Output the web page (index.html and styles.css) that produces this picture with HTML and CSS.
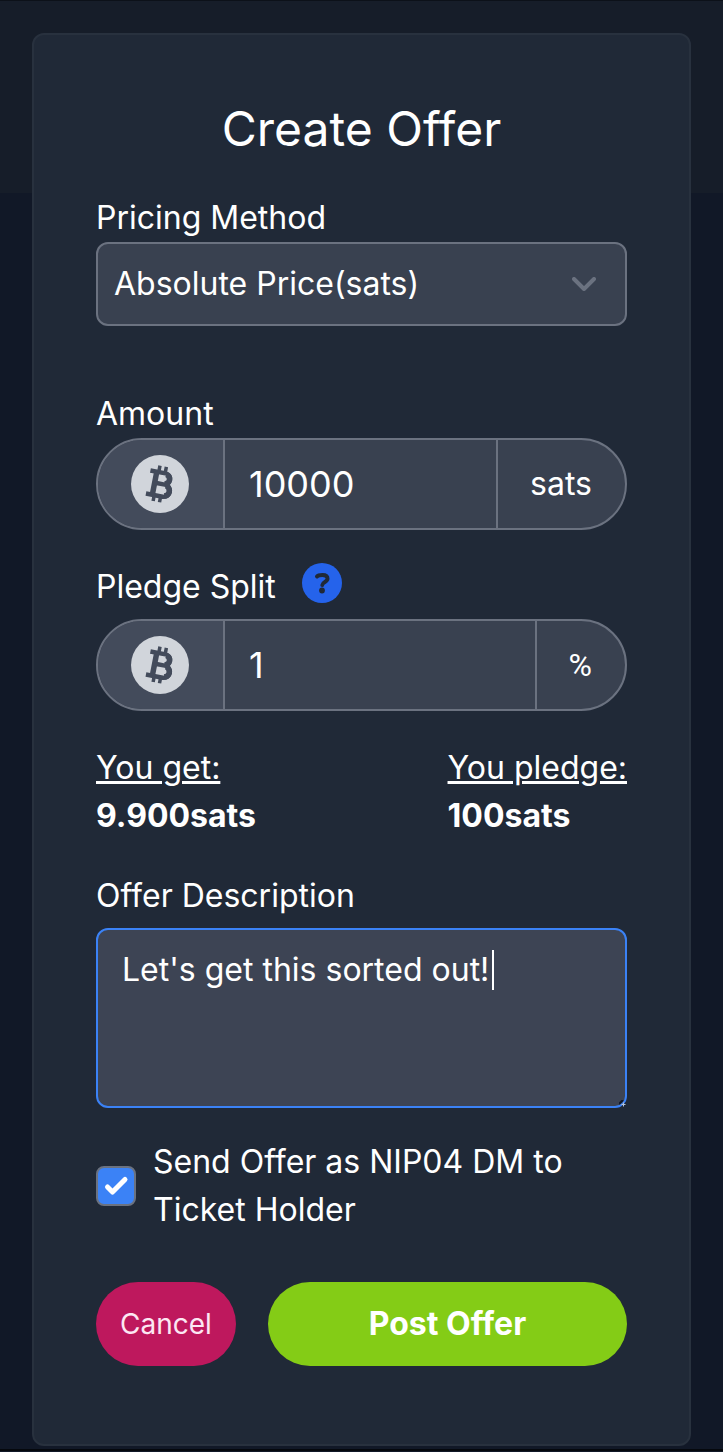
FILE: index.html
```html
<!DOCTYPE html>
<html lang="en">
<head>
<meta charset="utf-8">
<meta name="viewport" content="width=device-width, initial-scale=1">
<title>Create Offer</title>
<link rel="stylesheet" href="styles.css">
</head>
<body>
<svg class="sprite" aria-hidden="true">
  <symbol id="bitcoin" viewBox="0 0 58 58">
    <circle cx="29" cy="29" r="29" fill="#d1d5db"/>
    <g transform="rotate(11 29 29)" fill="none" stroke="#434b5b">
      <path stroke-width="4.500" d="M17 17.500H32.500a5.500 5.500 0 0 1 0 11.200H24M32.500 28.700H34a6 6 0 0 1 0 12.300H17"/>
      <path stroke-width="5.500" d="M23.500 17.500V41M33.500 18.500q4 1 4 4.700t-4 4.700M35.500 29.500q4 1.500 4 5.300t-4 5.200"/>
      <path stroke-width="3.500" d="M25.500 11V17M32 11V17M25.500 41V47M32 41V47"/>
    </g>
  </symbol>
</svg>
<main class="page">
  <form class="card">
    <h1 class="title">Create Offer</h1>

    <label class="label" for="method">Pricing Method</label>
    <div class="select-wrap">
      <select class="select" id="method"><option>Absolute Price(sats)</option></select>
      <svg class="chevron" viewBox="0 0 24 14" aria-hidden="true"><path d="M2 2l10 10L22 2"/></svg>
    </div>

    <label class="label label-amount" for="amount">Amount</label>
    <div class="group">
      <span class="addon addon-icon"><svg class="coin" aria-hidden="true"><use href="#bitcoin"/></svg></span>
      <input class="field" id="amount" type="text" inputmode="numeric" value="10000">
      <span class="addon">sats</span>
    </div>

    <div class="label-row">
      <label class="label" for="split">Pledge Split</label>
      <button class="help" type="button" aria-label="About pledge split">
        <svg class="help-icon" viewBox="0 0 40 40" aria-hidden="true"><circle cx="20" cy="20" r="20"/><path d="M15 13.500C16 12.200 18 12 20.500 12C23.800 12 25.500 13.500 25.500 15.800C25.500 19 20.500 18.800 20.300 22"/><circle class="dot" cx="20" cy="27.500" r="2.900"/></svg>
      </button>
    </div>
    <div class="group">
      <span class="addon addon-icon"><svg class="coin" aria-hidden="true"><use href="#bitcoin"/></svg></span>
      <input class="field" id="split" type="text" inputmode="numeric" value="1">
      <span class="addon addon-percent">%</span>
    </div>

    <div class="totals">
      <div><p class="total-name">You get:</p><p class="total-value">9.900sats</p></div>
      <div><p class="total-name">You pledge:</p><p class="total-value">100sats</p></div>
    </div>

    <label class="label" for="description">Offer Description</label>
    <div class="area-wrap">
      <textarea class="area" id="description">Let's get this sorted out!</textarea>
      <span class="caret"></span>
      <svg class="grip" viewBox="0 0 8 8" aria-hidden="true"><path class="grip-dark" d="M0 4l4-4"/><path class="grip-light" d="M4.500 2.500v4M2.500 4.500h4"/></svg>
    </div>

    <div class="check-row">
      <input class="check" id="dm" type="checkbox" checked>
      <svg class="tick" viewBox="0 0 40 40" aria-hidden="true"><path d="M11.500 21l5 5L29 13.500"/></svg>
      <label class="check-label" for="dm">Send Offer as NIP04 DM to Ticket Holder</label>
    </div>

    <div class="actions">
      <button class="btn btn-cancel" type="button">Cancel</button>
      <button class="btn btn-post" type="submit">Post Offer</button>
    </div>
  </form>
</main>
</body>
</html>
```

FILE: styles.css
```css
* {
  box-sizing: border-box;
}

body {
  margin: 0;
  background: #111827;
  color: #fff;
  font: 32px/48px Inter, "Liberation Sans", sans-serif;
}

.sprite {
  display: none;
}

.page {
  padding: 32px 32px 3px;
  border-top: 1px solid #0c1119;
  border-bottom: 2px solid #05080d;
  background: linear-gradient(#161d29 192px, #111827 192px);
}

.card {
  padding: 62px;
  border: 2px solid #28313e;
  border-radius: 12px;
  background: #202937;
}

.title {
  margin: 0 0 33px;
  font-size: 48px;
  font-weight: 400;
  line-height: 64px;
  text-align: center;
}

.label {
  display: block;
}

.select-wrap,
.area-wrap,
.check-row {
  position: relative;
}

.select,
.field,
.area,
.btn {
  font: inherit;
  color: inherit;
}

.select {
  display: block;
  width: 100%;
  height: 84px;
  padding: 0 64px 0 16px;
  border: 2px solid #6b7280;
  border-radius: 12px;
  background: #394150;
  appearance: none;
}

.chevron {
  position: absolute;
  top: 35px;
  right: 31px;
  width: 24px;
  height: 14px;
  fill: none;
  stroke: #6b7280;
  stroke-width: 4;
  stroke-linecap: round;
  stroke-linejoin: round;
}

.label-amount {
  margin-top: 64px;
}

.group {
  display: flex;
  height: 92px;
  border: 2px solid #6b7280;
  border-radius: 46px;
  background: #394150;
  overflow: hidden;
}

.addon {
  display: flex;
  align-items: center;
  padding: 0 33px 0 32px;
}

.addon-icon {
  background: #434b5b;
}

.addon-percent {
  font-family: Roboto, "Liberation Sans", sans-serif;
}

.coin {
  width: 60px;
  height: 58px;
}

.field {
  flex: 1;
  min-width: 0;
  padding: 0 24px;
  border: solid #6b7280;
  border-width: 0 2px;
  border-radius: 0;
  background: none;
  font-size: 36px;
  outline: none;
}

.label-row {
  display: flex;
  align-items: center;
  gap: 26px;
  margin: 33px 0 8px;
}

.help {
  display: flex;
  padding: 0 0 8px;
  border: 0;
  background: none;
}

.help-icon {
  width: 40px;
  height: 40px;
  fill: #2563eb;
}

.help-icon path {
  fill: none;
  stroke: #202937;
  stroke-width: 4;
  stroke-linecap: round;
}

.help-icon .dot {
  fill: #202937;
}

.totals {
  display: flex;
  justify-content: space-between;
  margin: 33px 0 32px;
}

.total-name,
.total-value {
  margin: 0;
}

.total-name {
  text-decoration: underline;
}

.total-value {
  font-weight: 700;
}

.area-wrap {
  margin-top: 8px;
}

.area {
  display: block;
  width: 100%;
  height: 180px;
  padding: 16px 24px;
  border: 2px solid #3b82f6;
  border-radius: 12px;
  background: #3d4454;
  outline: none;
  resize: none;
}

.caret {
  position: absolute;
  top: 22px;
  left: 396px;
  width: 2px;
  height: 40px;
  background: #fff;
}

.grip {
  position: absolute;
  right: 0;
  bottom: 0;
  width: 8px;
  height: 8px;
  fill: none;
}

.grip-dark {
  stroke: #111827;
  stroke-width: 2;
}

.grip-light {
  stroke: #b6c2d6;
  stroke-width: 1;
}

.check-row {
  display: flex;
  align-items: center;
  gap: 17px;
  margin: 30px 0 48px;
}

.check {
  flex: none;
  width: 40px;
  height: 40px;
  margin: 0;
  border: 2px solid #6b7280;
  border-radius: 8px;
  background: #3b82f6;
  appearance: none;
}

.tick {
  position: absolute;
  left: 0;
  width: 40px;
  height: 40px;
  fill: none;
  stroke: #fff;
  stroke-width: 5;
  stroke-linecap: round;
  stroke-linejoin: round;
  pointer-events: none;
}

.actions {
  display: flex;
  gap: 32px;
  padding-bottom: 16px;
}

.btn {
  height: 84px;
  padding: 0 24px;
  border: 0;
  border-radius: 42px;
}

.btn-cancel {
  background: #be185d;
  color: #fce7f3;
  font-size: 28px;
}

.btn-post {
  flex: 1;
  background: #84cc16;
  font-weight: 700;
}
```
